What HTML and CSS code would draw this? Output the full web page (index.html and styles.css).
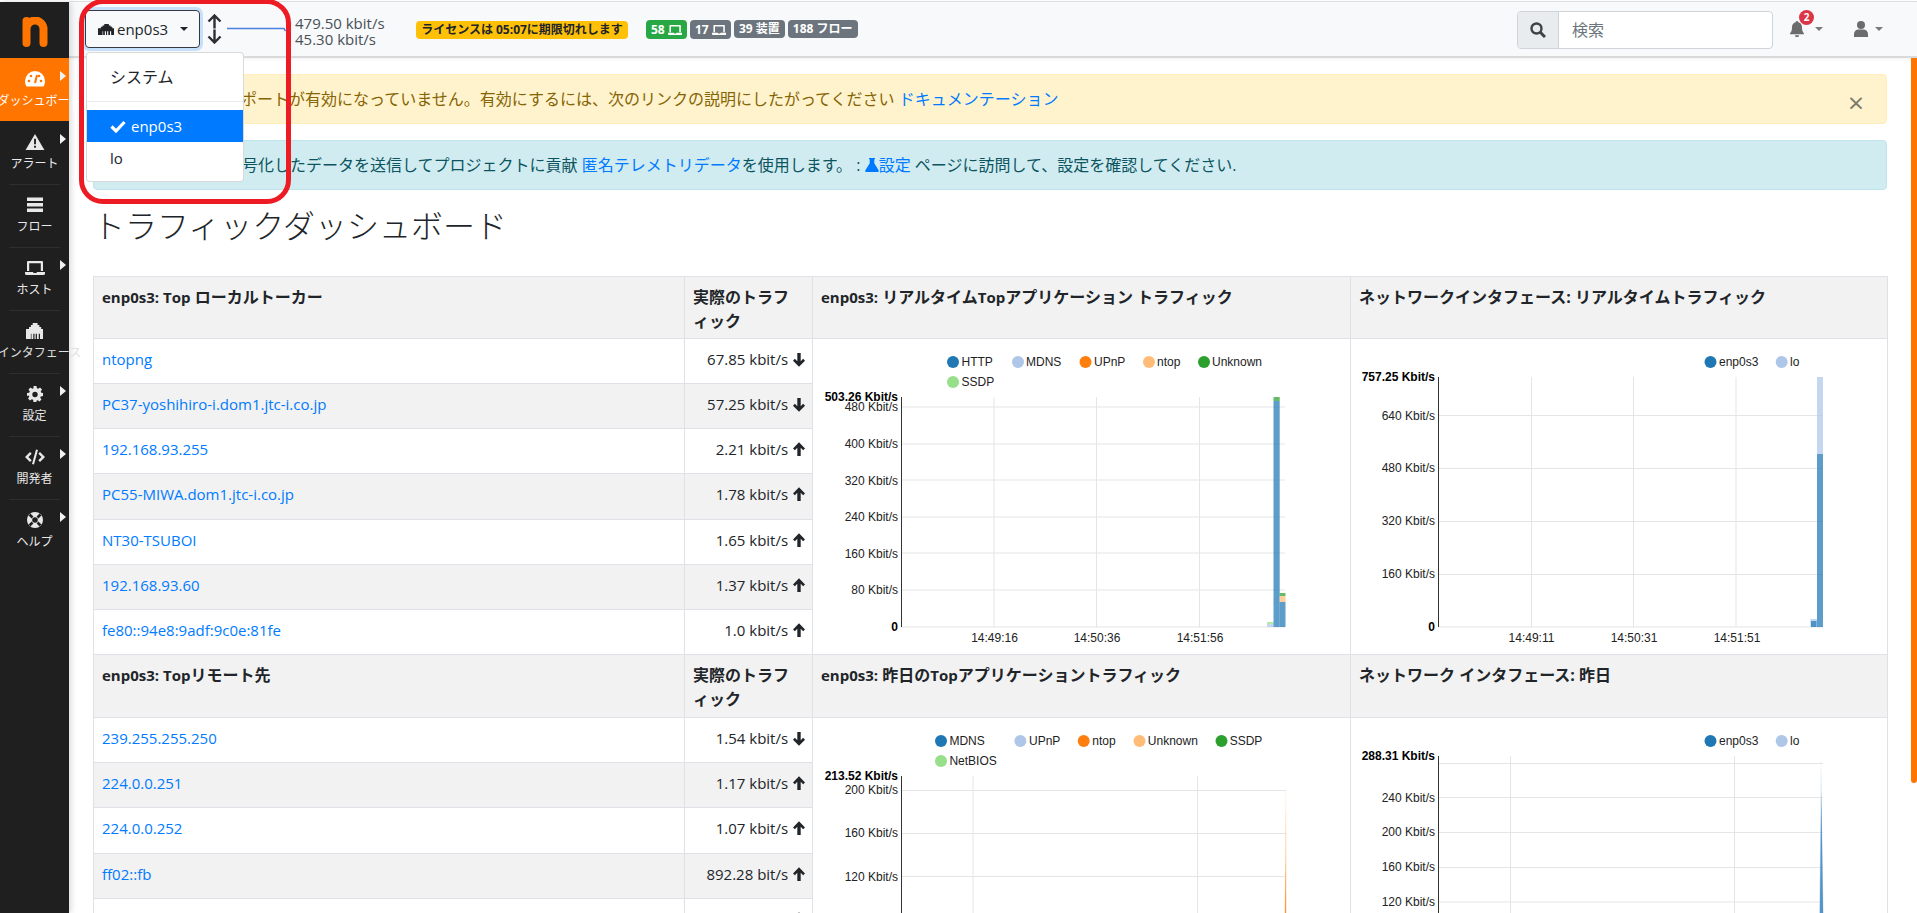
FILE: index.html
```html
<!DOCTYPE html>
<html lang="ja">
<head>
<meta charset="utf-8">
<title>ntopng</title>
<link rel="stylesheet" href="styles.css">
</head>
<body>
<svg class="defs" width="0" height="0" aria-hidden="true">
  <symbol id="i-eth" viewBox="2 0 28 24" preserveAspectRatio="none"><path d="M6 6h3V3h3V0h8v3h3v3h3v3h3v15h-5v-8h-2v8h-3v-8h-2v8h-2v-8h-2v8h-3v-8H9v8H1V9h5z" fill="currentColor" transform="translate(1 0)"/></symbol>
  <symbol id="i-laptop" viewBox="0 0 20 16"><path fill="currentColor" d="M3 1h14a1 1 0 0 1 1 1v9h-2.200V3.200H4.200V11H2V2a1 1 0 0 1 1-1zM0 12h8l.6 1h2.800l.6-1h8v1.500a1.500 1.500 0 0 1-1.500 1.500h-17A1.500 1.500 0 0 1 0 13.500z"/></symbol>
  <symbol id="i-down" viewBox="0 0 14 16"><path fill="currentColor" d="M5.200 1h3.600v8.800l2.600-2.700 2 2.100L7 15.700.6 9.200l2-2.100 2.600 2.700z"/></symbol>
  <symbol id="i-up" viewBox="0 0 14 16"><path fill="currentColor" d="M5.200 15h3.600V6.200l2.600 2.700 2-2.100L7 .3.6 6.800l2 2.100 2.600-2.700z"/></symbol>
  <symbol id="i-right" viewBox="0 0 6 10"><path fill="currentColor" d="M0 0l6 5-6 5z"/></symbol>
</svg>

<div class="app">
  <nav class="sidebar">
    <div class="logo"><svg width="26" height="30" viewBox="0 0 26 30"><path d="M4.500 26V4M4.500 12a8.500 8.500 0 0 1 17 0v14" fill="none" stroke="#ff7500" stroke-width="8" stroke-linecap="round"/></svg></div>
    <a class="side-item active">
      <svg class="side-icon" width="20" height="16" viewBox="0 0 20 16"><path fill="#fff" d="M10 0a10 10 0 0 0-10 10c0 2 .5 4 1.500 5.500h17C19.500 14 20 12 20 10A10 10 0 0 0 10 0z"/><circle cx="4" cy="10" r="1.300" fill="#ff7500"/><circle cx="6" cy="5" r="1.300" fill="#ff7500"/><circle cx="14" cy="5" r="1.300" fill="#ff7500"/><circle cx="16" cy="10" r="1.300" fill="#ff7500"/><path d="M10 12l2-8" stroke="#ff7500" stroke-width="2"/></svg>
      <span class="side-label wide">ダッシュボード</span>
      <svg class="side-caret" width="6" height="10"><use href="#i-right"/></svg>
    </a>
    <a class="side-item">
      <svg class="side-icon" width="20" height="17" viewBox="0 0 20 17"><path fill="#e8e8e8" d="M10 0l10 17H0z"/><path fill="#1f1f1f" d="M9 5h2v6H9zM9 12.500h2v2H9z"/></svg>
      <span class="side-label">アラート</span>
      <svg class="side-caret" width="6" height="10"><use href="#i-right"/></svg>
    </a>
    <a class="side-item">
      <svg class="side-icon" width="16" height="15" viewBox="0 0 16 15"><path fill="#e8e8e8" d="M0 0h16v3.500H0zM0 5.500h16V9H0zM0 11h16v3.500H0z"/></svg>
      <span class="side-label">フロー</span>
    </a>
    <a class="side-item">
      <svg class="side-icon" width="20" height="16"><use href="#i-laptop"/></svg>
      <span class="side-label">ホスト</span>
      <svg class="side-caret" width="6" height="10"><use href="#i-right"/></svg>
    </a>
    <a class="side-item">
      <svg class="side-icon" width="17" height="12"><use href="#i-eth"/></svg>
      <span class="side-label wide gray">インタフェース</span>
    </a>
    <a class="side-item">
      <svg class="side-icon" width="16" height="16" viewBox="0 0 16 16"><path fill="#e8e8e8" fill-rule="evenodd" d="M6.500 0h3l.4 2.200 1.300.6L13 1.500l2 2-1.300 1.900.6 1.300L16 7v3l-2.200.4-.6 1.300 1.300 1.800-2 2-1.800-1.300-1.300.6L9.500 16h-3l-.4-2.200-1.300-.6L3 14.500l-2-2 1.300-1.800-.6-1.300L0 10V7l2.200-.3.600-1.300L1.500 3.500l2-2 1.800 1.300 1.300-.6zM8 5.800a2.700 2.700 0 1 0 0 5.400 2.700 2.700 0 0 0 0-5.400z"/></svg>
      <span class="side-label">設定</span>
      <svg class="side-caret" width="6" height="10"><use href="#i-right"/></svg>
    </a>
    <a class="side-item">
      <svg class="side-icon" width="20" height="15" viewBox="0 0 20 15"><path fill="#e8e8e8" d="M5 2.500l1.700 1.700L3.400 7.500l3.300 3.300L5 12.500 0 7.500zM15 2.500l-1.700 1.700 3.300 3.300-3.300 3.300 1.700 1.700 5-5zM11 0l2 .5L9 15l-2-.5z"/></svg>
      <span class="side-label">開発者</span>
      <svg class="side-caret" width="6" height="10"><use href="#i-right"/></svg>
    </a>
    <a class="side-item">
      <svg class="side-icon" width="16" height="16" viewBox="0 0 16 16"><circle cx="8" cy="8" r="8" fill="#e8e8e8"/><path d="M2.500 2.500l3 3M13.500 2.500l-3 3M2.500 13.500l3-3M13.500 13.500l-3-3" stroke="#1f1f1f" stroke-width="2.600"/><circle cx="8" cy="8" r="2.800" fill="#1f1f1f"/></svg>
      <span class="side-label">ヘルプ</span>
      <svg class="side-caret" width="6" height="10"><use href="#i-right"/></svg>
    </a>
  </nav>

  <div class="main">
    <header class="topbar">
      <button class="iface-btn"><svg class="eth" width="16" height="11"><use href="#i-eth"/></svg><span>enp0s3</span><i class="caret dark"></i></button>
      <svg class="updown" width="15" height="30" viewBox="0 0 15 30"><path d="M7.500 1.500v13M1.500 7.500l6-6 6 6M7.500 15.500v13M1.500 22.500l6 6 6-6" fill="none" stroke="#2b3035" stroke-width="2.400"/></svg>
      <svg class="spark" width="59" height="6" viewBox="0 0 59 6"><path d="M0 1.500h57l1.500 2.500" fill="none" stroke="#4a7fe0" stroke-width="1.500"/></svg>
      <div class="rates"><div>479.50 kbit/s</div><div>45.30 kbit/s</div></div>
      <div class="badges">
        <span class="badge amber">ライセンスは 05:07に期限切れします</span>
        <div class="badge-group">
          <span class="badge green">58 <svg width="15" height="12"><use href="#i-laptop"/></svg></span>
          <span class="badge gray wide-b">17 <svg width="15" height="12"><use href="#i-laptop"/></svg></span>
          <span class="badge gray">39 装置</span>
          <span class="badge gray">188 フロー</span>
        </div>
      </div>
      <div class="search">
        <span class="search-btn"><svg width="16" height="16" viewBox="0 0 16 16"><circle cx="6.500" cy="6.500" r="5" fill="none" stroke="#3d4349" stroke-width="2.400"/><path d="M10.500 10.500l4.500 4.500" stroke="#3d4349" stroke-width="3"/></svg></span>
        <span class="search-input">検索</span>
      </div>
      <div class="tool bell">
        <svg width="14" height="16" viewBox="0 0 14 16"><path fill="#6c6c6c" d="M7 0a1.200 1.200 0 0 1 1.200 1.300C10.500 1.800 12 3.600 12 6c0 4 1 5 2 6.500v.8H0v-.8C1 11 2 10 2 6c0-2.400 1.500-4.200 3.800-4.700A1.200 1.200 0 0 1 7 0zM5 14.300h4a2 2 0 0 1-4 0z"/></svg>
        <span class="bell-count">2</span>
        <i class="caret"></i>
      </div>
      <div class="tool user">
        <svg width="14" height="16" viewBox="0 0 14 16"><circle cx="7" cy="4" r="4" fill="#6c6c6c"/><path fill="#6c6c6c" d="M0 16v-3a4.500 4.500 0 0 1 4.500-4.500h5A4.500 4.500 0 0 1 14 13v3z"/></svg>
        <i class="caret"></i>
      </div>
    </header>

    <main class="content">
      <div class="alert warn">
        <span>ポートが有効になっていません。有効にするには、次のリンクの説明にしたがってください <a>ドキュメンテーション</a></span>
        <span class="close">×</span>
      </div>
      <div class="alert info">
        <span>号化したデータを送信してプロジェクトに貢献 <a>匿名テレメトリデータ</a>を使用します。 : <svg class="flask" width="14" height="14" viewBox="0 0 14 14"><path fill="#007bff" d="M4 0h6v1.200H9.300v4l4.300 7c.5 1-.1 1.800-1.100 1.800h-11c-1 0-1.600-.8-1.100-1.800l4.300-7v-4H4z"/></svg><a>設定</a> ページに訪問して、設定を確認してください.</span>
      </div>
      <h2 class="title">トラフィックダッシュボード</h2>

      <table class="dash">
        <colgroup><col class="c1"><col class="c2"><col class="c3"><col class="c4"></colgroup>
        <tbody>
        <tr class="head first">
          <th><span class="lat">enp0s3: Top</span> ローカルトーカー</th>
          <th>実際のトラフィック</th>
          <th><span class="lat">enp0s3:</span> リアルタイム<span class="lat">Top</span>アプリケーション トラフィック</th>
          <th>ネットワークインタフェース: リアルタイムトラフィック</th>
        </tr>
        <tr>
          <td><a>ntopng</a></td>
          <td class="val">67.85 kbit/s <svg width="14" height="15"><use href="#i-down"/></svg></td>
          <td class="chart" rowspan="7">
            <svg viewBox="812 339 538 315" width="538" height="315">
              <g class="grid">
                <path d="M900 407H1284M900 444H1284M900 480H1284M900 517H1284M900 553H1284M900 590H1284M900 627H1284M993 397V627M1095.500 397V627M1198.500 397V627"/>
              </g>
              <path class="axis" d="M900.500 397V627"/>
              <g class="bars">
                <rect x="1266" y="624" width="6.500" height="3" fill="#aec7e8"/>
                <rect x="1266" y="622" width="6.500" height="2" fill="#98df8a"/>
                <rect x="1272.500" y="401" width="6.200" height="226" fill="#1f77b4"/>
                <rect x="1272.500" y="397" width="6.200" height="4" fill="#2ca02c"/>
                <rect x="1278.700" y="602" width="5.800" height="25" fill="#1f77b4"/>
                <rect x="1278.700" y="596" width="5.800" height="6" fill="#ffbb78"/>
                <rect x="1278.700" y="593" width="5.800" height="3" fill="#2ca02c"/>
              </g>
              <g class="leg"><circle cx="952" cy="362" r="6" fill="#1f77b4"/><text x="960.500" y="366">HTTP</text><circle cx="1017" cy="362" r="6" fill="#aec7e8"/><text x="1025" y="366">MDNS</text><circle cx="1084.500" cy="362" r="6" fill="#ff7f0e"/><text x="1093" y="366">UPnP</text><circle cx="1148" cy="362" r="6" fill="#ffbb78"/><text x="1156" y="366">ntop</text><circle cx="1203" cy="362" r="6" fill="#2ca02c"/><text x="1211" y="366">Unknown</text><circle cx="952" cy="382" r="6" fill="#98df8a"/><text x="960.500" y="386">SSDP</text></g>
              <g class="ylab"><text class="max" x="897" y="401">503.26 Kbit/s</text><text x="897" y="411">480 Kbit/s</text><text x="897" y="448">400 Kbit/s</text><text x="897" y="485">320 Kbit/s</text><text x="897" y="521">240 Kbit/s</text><text x="897" y="558">160 Kbit/s</text><text x="897" y="594">80 Kbit/s</text><text class="max" x="897" y="631">0</text></g>
              <g class="xlab"><text x="993.500" y="642">14:49:16</text><text x="1096" y="642">14:50:36</text><text x="1199" y="642">14:51:56</text></g>
            </svg>
          </td>
          <td class="chart" rowspan="7">
            <svg viewBox="1350 339 537 315" width="537" height="315">
              <g class="grid">
                <path d="M1437 415.500H1822M1437 468.500H1822M1437 521.500H1822M1437 574.500H1822M1437 627H1822M1530.500 377V627M1632.500 377V627M1735 377V627"/>
              </g>
              <path class="axis" d="M1437.500 377V627"/>
              <g class="bars">
                <rect x="1809.300" y="619" width="6.700" height="8" fill="#aec7e8"/>
                <rect x="1810" y="621" width="5.500" height="6" fill="#1f77b4"/>
                <rect x="1816" y="454" width="6" height="173" fill="#1f77b4"/>
                <rect x="1816" y="377" width="6" height="77" fill="#aec7e8"/>
              </g>
              <g class="leg"><circle cx="1709.500" cy="362" r="6" fill="#1f77b4"/><text x="1718" y="366">enp0s3</text><circle cx="1780.700" cy="362" r="6" fill="#aec7e8"/><text x="1789" y="366">lo</text></g>
              <g class="ylab"><text class="max" x="1434" y="381">757.25 Kbit/s</text><text x="1434" y="420">640 Kbit/s</text><text x="1434" y="472">480 Kbit/s</text><text x="1434" y="525">320 Kbit/s</text><text x="1434" y="578">160 Kbit/s</text><text class="max" x="1434" y="631">0</text></g>
              <g class="xlab"><text x="1530.500" y="642">14:49:11</text><text x="1633" y="642">14:50:31</text><text x="1736" y="642">14:51:51</text></g>
            </svg>
          </td>
        </tr>
        <tr class="odd"><td><a>PC37-yoshihiro-i.dom1.jtc-i.co.jp</a></td><td class="val">57.25 kbit/s <svg width="14" height="15"><use href="#i-down"/></svg></td></tr>
        <tr><td><a>192.168.93.255</a></td><td class="val">2.21 kbit/s <svg width="14" height="15"><use href="#i-up"/></svg></td></tr>
        <tr class="odd"><td><a>PC55-MIWA.dom1.jtc-i.co.jp</a></td><td class="val">1.78 kbit/s <svg width="14" height="15"><use href="#i-up"/></svg></td></tr>
        <tr><td><a>NT30-TSUBOI</a></td><td class="val">1.65 kbit/s <svg width="14" height="15"><use href="#i-up"/></svg></td></tr>
        <tr class="odd"><td><a>192.168.93.60</a></td><td class="val">1.37 kbit/s <svg width="14" height="15"><use href="#i-up"/></svg></td></tr>
        <tr><td><a>fe80::94e8:9adf:9c0e:81fe</a></td><td class="val">1.0 kbit/s <svg width="14" height="15"><use href="#i-up"/></svg></td></tr>

        <tr class="head">
          <th><span class="lat">enp0s3: Top</span>リモート先</th>
          <th>実際のトラフィック</th>
          <th><span class="lat">enp0s3:</span> 昨日の<span class="lat">Top</span>アプリケーショントラフィック</th>
          <th>ネットワーク インタフェース: 昨日</th>
        </tr>
        <tr>
          <td><a>239.255.255.250</a></td>
          <td class="val">1.54 kbit/s <svg width="14" height="15"><use href="#i-down"/></svg></td>
          <td class="chart" rowspan="5">
            <svg viewBox="812 717 538 225" width="538" height="225">
              <g class="grid">
                <path d="M900 789.500H1285M900 832.500H1285M900 875.500H1285M900 918.500H1285M972 775V942M1196.500 775V942"/>
              </g>
              <path class="axis" d="M900.500 775V942"/>
              <path d="M1285 780L1285.500 942H1283.500z" fill="#ffbb78" opacity=".8"/>
              <path d="M1284.500 860L1285.300 942H1283.800z" fill="#ff7f0e" opacity=".8"/>
              <g class="leg"><circle cx="940" cy="740" r="6" fill="#1f77b4"/><text x="948.400" y="744">MDNS</text><circle cx="1019.400" cy="740" r="6" fill="#aec7e8"/><text x="1028" y="744">UPnP</text><circle cx="1082.700" cy="740" r="6" fill="#ff7f0e"/><text x="1091.300" y="744">ntop</text><circle cx="1138.500" cy="740" r="6" fill="#ffbb78"/><text x="1146.800" y="744">Unknown</text><circle cx="1220.500" cy="740" r="6" fill="#2ca02c"/><text x="1228.700" y="744">SSDP</text><circle cx="940" cy="760" r="6" fill="#98df8a"/><text x="948.400" y="764">NetBIOS</text></g>
              <g class="ylab"><text class="max" x="897" y="779">213.52 Kbit/s</text><text x="897" y="793">200 Kbit/s</text><text x="897" y="836">160 Kbit/s</text><text x="897" y="880">120 Kbit/s</text></g>
            </svg>
          </td>
          <td class="chart" rowspan="5">
            <svg viewBox="1350 717 537 225" width="537" height="225">
              <g class="grid">
                <path d="M1437 762.500H1822M1437 796.500H1822M1437 831.500H1822M1437 866.500H1822M1437 901H1822M1509.500 755V942M1733.500 755V942"/>
              </g>
              <path class="axis" d="M1437.500 755V942"/>
              <path d="M1820 757L1823 942H1818z" fill="#aec7e8" opacity=".6"/>
              <path d="M1820.300 790L1822.500 942H1818.500z" fill="#1f77b4" opacity=".7"/>
              <g class="leg"><circle cx="1709.500" cy="740" r="6" fill="#1f77b4"/><text x="1718" y="744">enp0s3</text><circle cx="1780.700" cy="740" r="6" fill="#aec7e8"/><text x="1789" y="744">lo</text></g>
              <g class="ylab"><text class="max" x="1434" y="759">288.31 Kbit/s</text><text x="1434" y="801">240 Kbit/s</text><text x="1434" y="835">200 Kbit/s</text><text x="1434" y="870">160 Kbit/s</text><text x="1434" y="905">120 Kbit/s</text></g>
            </svg>
          </td>
        </tr>
        <tr class="odd"><td><a>224.0.0.251</a></td><td class="val">1.17 kbit/s <svg width="14" height="15"><use href="#i-up"/></svg></td></tr>
        <tr><td><a>224.0.0.252</a></td><td class="val">1.07 kbit/s <svg width="14" height="15"><use href="#i-up"/></svg></td></tr>
        <tr class="odd"><td><a>ff02::fb</a></td><td class="val">892.28 bit/s <svg width="14" height="15"><use href="#i-up"/></svg></td></tr>
        <tr><td><a>ff02::1:3</a></td><td class="val">684.7 bit/s <svg width="14" height="15"><use href="#i-up"/></svg></td></tr>
        </tbody>
      </table>
    </main>
  </div>
</div>

<div class="dropdown">
  <div class="dd-item">システム</div>
  <div class="dd-sep"></div>
  <div class="dd-item sel"><svg width="16" height="13" viewBox="0 0 16 13"><path d="M1.500 6.500l4.500 4.500L14.500 2" fill="none" stroke="#fff" stroke-width="3.200"/></svg>enp0s3</div>
  <div class="dd-item">lo</div>
</div>
<div class="red-frame"></div>
<div class="scroll-thumb"></div>
</body>
</html>
```
FILE: styles.css
```css
* { box-sizing: border-box; }
html, body { margin: 0; height: 913px; overflow: hidden; background: #fff; }
body {
  font-family: "Open Sans", "Noto Sans CJK JP", sans-serif;
  font-size: 16px;
  line-height: 24px;
  color: #212529;
  position: relative;
}
a { color: #007bff; text-decoration: none; }
.defs { position: absolute; }
.app { display: flex; height: 913px; padding-top: 2px; }

/* sidebar */
.sidebar {
  width: 69px;
  flex: none;
  background: #1f1f1f;
  color: #e8e8e8;
  box-shadow: 2px 0 6px rgba(0,0,0,.15);
  z-index: 2;
}
.logo { height: 56px; display: flex; align-items: center; justify-content: center; padding-top: 4px; }
.side-item {
  position: relative;
  display: flex;
  flex-direction: column;
  align-items: center;
  height: 63px;
  color: #e8e8e8;
  padding-top: 13px;
}
.side-item + .side-item:not(.active)::before {
  content: "";
  position: absolute;
  left: 9px; right: 9px; top: 0;
  border-top: 1px solid #2e2e2e;
}
.side-item.active { background: #ff7500; color: #fff; }
.side-item.active + .side-item::before { display: none; }
.side-icon { flex: none; height: 16px; color: #e8e8e8; }
.side-label {
  font-size: 12px;
  line-height: 16px;
  margin-top: 6px;
  white-space: nowrap;
}
.side-label.wide { transform: translateX(5px); }
.side-label.gray { color: #e0e0e0; }
.side-caret { position: absolute; left: 60px; top: 13px; color: #f2f2f2; }

/* top bar */
.main { flex: 1; min-width: 0; }
.topbar {
  height: 57px;
  display: flex;
  align-items: center;
  background: #f8f9fa;
  border-top: 1px solid #dcdee0;
  border-bottom: 2px solid #d8dadc;
  box-shadow: 0 1px 3px rgba(0,0,0,.06);
  padding-left: 16px;
  margin-top: -1px;
}
.iface-btn {
  width: 115px;
  height: 38px;
  flex: none;
  display: flex;
  align-items: center;
  gap: 3px;
  padding: 0 0 0 12px;
  background: #f8f9fa;
  border: 1px solid #343a40;
  border-radius: 4px;
  box-shadow: 0 0 0 3px rgba(0,123,255,.2);
  color: #212529;
  font: 15px/1 "Open Sans", sans-serif;
}
.iface-btn .caret { margin-left: 9px; }
.caret {
  display: inline-block;
  width: 0; height: 0;
  border-left: 4px solid transparent;
  border-right: 4px solid transparent;
  border-top: 4.500px solid #7a7a7a;
}
.caret.dark { border-top-color: #212529; }
.updown { margin-left: 7px; flex: none; }
.spark { margin-left: 5px; flex: none; margin-top: 2px; }
.rates { margin-left: 9px; width: 121px; font-size: 15px; line-height: 16px; color: #495057; flex: none; margin-top: 3px; }
.badges { display: flex; align-items: center; gap: 18px; flex: none; margin-top: 1px; }
.badge {
  display: inline-flex;
  align-items: center;
  justify-content: center;
  gap: 3px;
  height: 18px;
  padding: 0 5px;
  border-radius: 4px;
  font-size: 12px;
  line-height: 1;
  font-weight: 700;
  white-space: nowrap;
}
.badge.amber { background: #ffc107; color: #212529; width: 212px; }
.badge-group { display: flex; gap: 3px; align-items: flex-start; }
.badge.green { background: #28a745; color: #fff; width: 41px; height: 19px; }
.badge.gray { background: #6c757d; color: #fff; }
.badge.wide-b { width: 41px; height: 19px; }
.search {
  margin-left: auto;
  width: 256px;
  height: 38px;
  flex: none;
  display: flex;
  border: 1px solid #ced4da;
  border-radius: 4px;
  overflow: hidden;
  background: #fff;
  margin-top: 1px;
}
.search-btn { width: 41px; background: #e9ecef; border-right: 1px solid #ced4da; display: flex; align-items: center; justify-content: center; }
.search-input { padding: 6px 13px; color: #6c757d; font-size: 16px; line-height: 24px; }
.tool { position: relative; display: flex; align-items: center; flex: none; }
.bell { margin-left: 17px; width: 64px; gap: 11px; }
.user { width: 63px; gap: 7px; }
.bell-count {
  position: absolute;
  left: 9px; top: -11px;
  width: 15px; height: 15px;
  border-radius: 50%;
  background: #dc3545;
  color: #fff;
  font-size: 10px;
  font-weight: 700;
  line-height: 15px;
  text-align: center;
}

/* content */
.content { padding: 16px 0 0 24px; }
.alert {
  width: 1794px;
  height: 50px;
  display: flex;
  justify-content: space-between;
  align-items: center;
  padding: 0 20px;
  border: 1px solid;
  border-radius: 4px;
  margin-bottom: 16px;
  white-space: nowrap;
}
.alert.warn { background: #fff3cd; border-color: #ffeeba; color: #856404; padding-left: 147px; }
.alert.info { background: #d1ecf1; border-color: #bee5eb; color: #0c5460; padding-left: 148px; }
.flask { vertical-align: -1px; }
.close { font-size: 28px; line-height: 24px; color: #7c7a6c; margin-right: 2px; margin-top: 6px; }
.title { margin: 0; height: 70px; font-size: 32px; line-height: 40px; font-weight: 300; color: #212529; }

/* table */
.dash { width: 1794px; table-layout: fixed; border-collapse: collapse; }
.c1 { width: 591px; }
.c2 { width: 128px; }
.c3 { width: 538px; }
.c4 { width: 537px; }
.dash th, .dash td { border: 1px solid #dee2e6; padding: 8px 8px 0; vertical-align: top; text-align: left; }
.dash th { height: 63px; background: #f2f2f2; font-weight: 700; }
.dash .first th { height: 62px; }
.dash td { height: 45px; font-size: 15px; }
.lat { font-size: 15px; }
.dash tr.odd td { background: #f2f2f2; }
.dash td.chart { padding: 0; background: #fff; height: auto; overflow: hidden; }
.dash td.val { text-align: right; white-space: nowrap; padding-right: 6px; }
.val svg { vertical-align: -2px; color: #212529; }
.chart svg { display: block; }
.grid path { stroke: #e5e5e5; stroke-width: 1; fill: none; }
.axis { stroke: #333; stroke-width: 1; fill: none; }
.bars rect { opacity: .72; }
.chart text { font-family: "Liberation Sans", sans-serif; font-size: 12px; fill: #222; }
.ylab text { text-anchor: end; }
.ylab .max { font-weight: 700; fill: #000; }
.xlab text { text-anchor: middle; }

/* overlays */
.dropdown {
  position: absolute;
  left: 86px; top: 52px;
  width: 158px; height: 130px;
  background: #fff;
  border: 1px solid rgba(0,0,0,.15);
  border-radius: 4px;
  z-index: 5;
  padding-top: 9px;
}
.dd-item { height: 32px; padding: 4px 23px; white-space: nowrap; display: flex; align-items: center; gap: 5px; font-size: 15px; }
.dd-item:first-child { font-size: 16px; height: 34px; padding-top: 0; }
.dd-sep { border-top: 1px solid #e9ecef; margin: 5px 0 8px; }
.dd-item.sel { background: #007bff; color: #fff; }
.red-frame {
  position: absolute;
  left: 79px; top: -1px;
  width: 212px; height: 205px;
  border: 5px solid #ed1c24;
  border-radius: 24px;
  z-index: 6;
}
.scroll-thumb {
  position: absolute;
  left: 1911px; top: 58px;
  width: 6px; height: 725px;
  background: #ff7500;
  border-radius: 0 0 3px 3px;
  z-index: 4;
}
```
